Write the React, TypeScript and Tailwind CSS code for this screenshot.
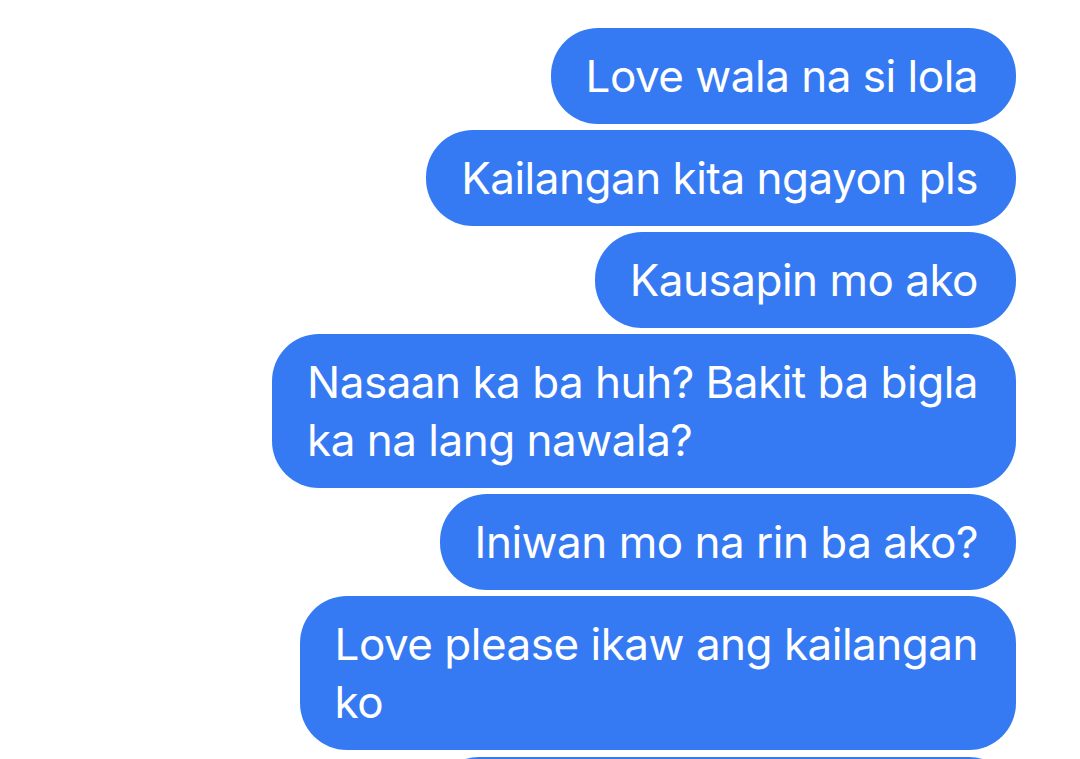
import React from "react";

const bubbles: string[][] = [
  ["Love wala na si lola"],
  ["Kailangan kita ngayon pls"],
  ["Kausapin mo ako"],
  ["Nasaan ka ba huh? Bakit ba bigla", "ka na lang nawala?"],
  ["Iniwan mo na rin ba ako?"],
  ["Love please ikaw ang kailangan", "ko"],
];

export default function App() {
  return (
    <div className="w-[1080px] h-[759px] overflow-hidden bg-white">
      <div
        className="flex flex-col items-end gap-[6px] pt-[28px] pr-[64px]"
        style={{ fontFamily: "Inter, 'Liberation Sans', sans-serif" }}
      >
        {bubbles.map((lines, i) => (
          <div
            key={i}
            className="bg-[#367af3] text-white rounded-[47px] pl-[35px] pr-[38px] py-[19px] text-[44px] leading-[58px] tracking-[-0.5px] whitespace-nowrap"
          >
            {lines.map((l, j) => (
              <div key={j}>{l}</div>
            ))}
          </div>
        ))}
        <div className="bg-[#367af3] rounded-[47px] w-[584px] h-[96px] mt-[1px]" />
      </div>
    </div>
  );
}
